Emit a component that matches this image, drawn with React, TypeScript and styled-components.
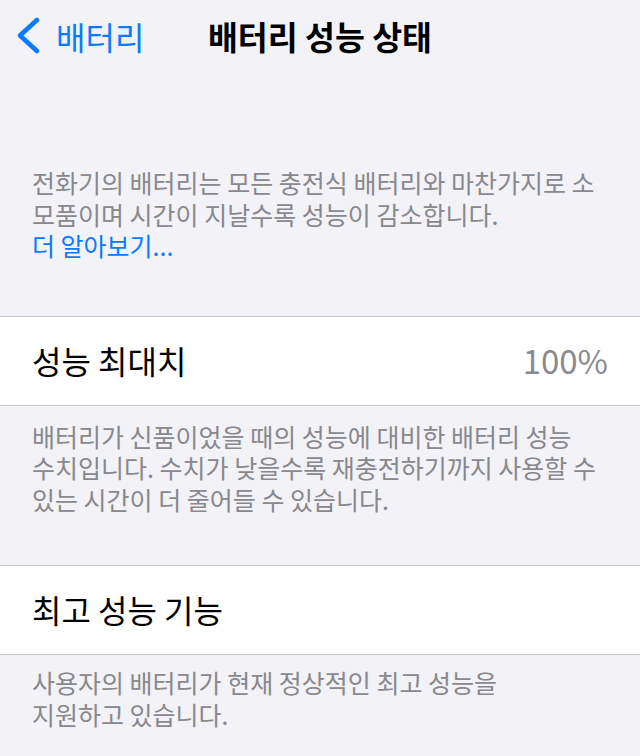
import React from 'react';
import styled, { createGlobalStyle } from 'styled-components';

const GlobalStyle = createGlobalStyle`
  html, body {
    margin: 0;
    padding: 0;
    background: #f2f2f7;
  }
  body {
    font-family: "Noto Sans CJK KR", "Noto Sans", sans-serif;
    -webkit-font-smoothing: antialiased;
  }
`;

const infoLines = [
  '전화기의 배터리는 모든 충전식 배터리와 마찬가지로 소',
  '모품이며 시간이 지날수록 성능이 감소합니다.',
];

const capacityLines = [
  '배터리가 신품이었을 때의 성능에 대비한 배터리 성능',
  '수치입니다. 수치가 낮을수록 재충전하기까지 사용할 수',
  '있는 시간이 더 줄어들 수 있습니다.',
];

const peakLines = ['사용자의 배터리가 현재 정상적인 최고 성능을', '지원하고 있습니다.'];

function BackChevron() {
  return (
    <svg width="26" height="40" viewBox="0 0 26 40" aria-hidden>
      <path
        d="M21 4 L4 19.5 L21 35"
        fill="none"
        stroke="#0a7aff"
        strokeWidth="4.6"
        strokeLinecap="round"
        strokeLinejoin="round"
      />
    </svg>
  );
}

function App() {
  return (
    <>
      <GlobalStyle />
      <Page>
        <NavBar>
          <BackButton>
            <BackChevron />
            <BackLabel>배터리</BackLabel>
          </BackButton>
          <NavTitle>배터리 성능 상태</NavTitle>
          <span />
        </NavBar>

        <Footer $top={91}>
          {infoLines.map((line) => (
            <Line key={line}>{line}</Line>
          ))}
          <LearnMore>더 알아보기...</LearnMore>
        </Footer>

        <Group $top={54}>
          <Cell>
            <CellLabel>성능 최대치</CellLabel>
            <CellValue>100%</CellValue>
          </Cell>
        </Group>
        <Footer $top={15}>
          {capacityLines.map((line) => (
            <Line key={line}>{line}</Line>
          ))}
        </Footer>

        <Group $top={50}>
          <Cell>
            <CellLabel>최고 성능 기능</CellLabel>
          </Cell>
        </Group>
        <Footer $top={12}>
          {peakLines.map((line) => (
            <Line key={line}>{line}</Line>
          ))}
        </Footer>
      </Page>
    </>
  );
}

const Page = styled.div`
  width: 640px;
  min-height: 756px;
  background: #f2f2f7;
  overflow: hidden;
`;

const NavBar = styled.header`
  display: grid;
  grid-template-columns: 1fr auto 1fr;
  align-items: center;
  height: 76px;
  padding-bottom: 4px;
  box-sizing: border-box;
`;

const BackButton = styled.div`
  display: flex;
  align-items: center;
  gap: 14px;
  padding-left: 16px;
`;

const BackLabel = styled.span`
  font-size: 32px;
  color: #0a7aff;
  line-height: 1;
`;

const NavTitle = styled.h1`
  margin: 0;
  font-size: 32.5px;
  font-weight: 700;
  color: #000;
  line-height: 1;
`;

const Footer = styled.div<{ $top: number }>`
  padding: ${(p) => p.$top}px 32px 0;
  font-size: 25px;
  line-height: 31.5px;
  color: #88888d;
`;

const Line = styled.div`
  white-space: nowrap;
`;

const LearnMore = styled.div`
  color: #0a7aff;
`;

const Group = styled.section<{ $top: number }>`
  margin-top: ${(p) => p.$top}px;
  background: #fff;
  border-top: 1px solid #c6c6c8;
  border-bottom: 1px solid #c6c6c8;
`;

const Cell = styled.div`
  display: flex;
  align-items: center;
  justify-content: space-between;
  height: 88px;
  padding: 0 32px 2px;
  box-sizing: border-box;
`;

const CellLabel = styled.span`
  font-size: 32px;
  color: #000;
`;

const CellValue = styled.span`
  font-size: 33px;
  color: #8a8a8e;
`;

export default App;
